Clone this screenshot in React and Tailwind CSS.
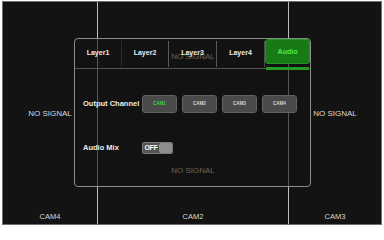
export default function App() {
  const tabs = ["Layer1", "Layer2", "Layer3", "Layer4"];
  const sepColors = ["bg-[#2c2c2c]", "bg-[#5a5a5a]", "bg-[#5a5a5a]", "bg-[#4a4a4a]"];
  const tabW = ["w-[46px]", "w-[46px]", "w-[47px]", "w-[47px]"];
  return (
    <div className="relative w-[384px] h-[228px] bg-white overflow-hidden font-['Liberation_Sans',Arial,sans-serif]">
      <div className="ml-[2px] mt-[1px] w-[380px] h-[224px] border border-[#6e6e6e] bg-[#131313] flex">
        <div className="w-[94px] flex flex-col">
          <div className="flex-1 pt-[16px] flex items-center justify-center text-[8px] text-[#dadada]">NO SIGNAL</div>
          <div className="h-[14px] flex items-center justify-center text-[7.5px] text-[#dadada]">CAM4</div>
        </div>
        <div className="w-px bg-[#bdbdbd]" />
        <div className="w-[190px] flex flex-col">
          <div className="h-[110px] flex items-center justify-center text-[8px] text-[#dadada]">NO SIGNAL</div>
          <div className="flex-1 pt-[20px] flex items-center justify-center text-[8px] text-[#dadada]">NO SIGNAL</div>
          <div className="h-[14px] flex items-center justify-center text-[7.5px] text-[#dadada]">CAM2</div>
        </div>
        <div className="w-px bg-[#bdbdbd]" />
        <div className="flex-1 flex flex-col">
          <div className="flex-1 pt-[16px] flex items-center justify-center text-[8px] text-[#dadada]">NO SIGNAL</div>
          <div className="h-[14px] flex items-center justify-center text-[7.5px] text-[#dadada]">CAM3</div>
        </div>
      </div>

      <div className="absolute left-[74px] top-[38px] w-[237px] h-[149px] border border-[#8c8c8c] rounded-[4px] bg-[#131313]/60 flex flex-col">
        <div className="flex h-[30px] border-b border-[#555]">
          {tabs.map((t, i) => (
            <div key={t} className="flex">
              <div className={`${tabW[i]} flex items-center justify-center text-[7px] font-bold text-[#ececec]`}>{t}</div>
              <div className={`w-px h-[26px] self-center ${sepColors[i]}`} />
            </div>
          ))}
          <div className="relative flex-1">
            <div className="absolute left-0 right-0 top-0 h-[25px] rounded-[3px] bg-[#177a17] border border-[#239423] flex items-center justify-center pt-[2px] text-[7px] font-bold text-[#4ee84e]">
              Audio
            </div>
            <div className="absolute left-[1px] right-[1px] bottom-[-2px] h-[3px] bg-[#239a23]" />
          </div>
        </div>

        <div className="mt-[26px] flex items-center h-[18px]">
          <div className="w-[67px] pl-[8px] text-[7.5px] font-bold text-[#ececec] whitespace-nowrap">Output Channel</div>
          <div className="flex gap-[5px]">
            {["CAM1", "CAM2", "CAM3", "CAM4"].map((c, i) => (
              <div
                key={c}
                className={`w-[35px] h-[18px] rounded-[3px] bg-[#4a4a4a] border border-[#626262] flex items-center justify-center text-[4.5px] font-bold ${i === 0 ? "text-[#3fd23f]" : "text-[#d6d6d6]"}`}
              >
                {c}
              </div>
            ))}
          </div>
        </div>

        <div className="mt-[29px] flex items-center h-[12px]">
          <div className="w-[67px] pl-[8px] text-[7.5px] font-bold text-[#ececec] whitespace-nowrap">Audio Mix</div>
          <div className="w-[31px] h-[12px] rounded-[2px] border border-[#7a7a7a] bg-[#545454] flex items-stretch">
            <div className="w-[16px] flex items-center justify-center text-[7px] font-bold text-white tracking-[-0.3px]">OFF</div>
            <div className="flex-1 rounded-[2px] bg-[#8e8e8e]" />
          </div>
        </div>
      </div>
    </div>
  );
}
